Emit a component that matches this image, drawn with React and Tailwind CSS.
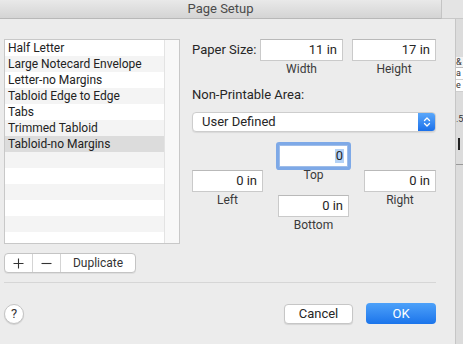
import React from "react";

const rows = [
  "Half Letter",
  "Large Notecard Envelope",
  "Letter-no Margins",
  "Tabloid Edge to Edge",
  "Tabs",
  "Trimmed Tabloid",
  "Tabloid-no Margins",
  "",
  "",
  "",
  "",
  "",
  "",
];

function Field({ children, w }) {
  return (
    <div
      className={`h-[22px] bg-white border border-[#cacaca] border-t-[#b9b9b9] flex items-center justify-end pr-[5px] text-[13px] text-[#262626] ${w}`}
    >
      {children}
    </div>
  );
}

function Label({ children }) {
  return <div className="h-[14px] leading-[14px] text-[12px] text-[#3a3a3a] text-center whitespace-nowrap">{children}</div>;
}

export default function App() {
  return (
    <div className="w-[463px] h-[344px] overflow-hidden flex flex-col bg-[#ececec] font-['Roboto',sans-serif] text-[#262626]">
      {/* title bar row */}
      <div className="h-[19px] flex shrink-0">
        <div className="w-[442px] h-full bg-gradient-to-b from-[#e9e9e9] to-[#d4d4d4] border-b border-[#b8b8b8] border-r border-r-[#c4c4c4] flex items-center justify-center text-[13px] text-[#4b4b4b]">
          Page Setup
        </div>
        <div className="flex-1 bg-[#e4e4e4] border-b border-[#c8c8c8]" />
      </div>

      <div className="flex-1 flex min-h-0">
        {/* sheet */}
        <div className="w-[456px] h-full bg-[#ececec] border-r border-[#c6c6c6] pl-[4px] pr-[19px] pt-[20px] flex flex-col">
          <div className="flex">
            {/* left column */}
            <div className="w-[176px] flex flex-col">
              <div className="h-[205px] border border-[#c8c8c8] flex overflow-hidden bg-white">
                <div className="w-[159px] flex flex-col">
                  {rows.map((r, i) => (
                    <div
                      key={i}
                      className={`h-[16px] shrink-0 leading-[16px] pl-[3px] text-[12px] text-[#222] whitespace-nowrap ${
                        i === 6 ? "bg-[#dcdcdc]" : i % 2 === 0 ? "bg-white" : "bg-[#f4f4f4]"
                      }`}
                    >
                      {r}
                    </div>
                  ))}
                </div>
                <div className="flex-1 bg-[#f8f8f8] border-l border-[#e3e3e3]" />
              </div>
              <div className="mt-[9px] h-[20px] w-[132px] flex bg-white border border-[#c4c4c4] rounded-[4px] shadow-[0_1px_0_rgba(0,0,0,0.06)] text-[#333]">
                <div className="w-[28px] flex items-center justify-center border-r border-[#d4d4d4]">
                  <svg width="11" height="11" viewBox="0 0 11 11">
                    <path d="M5.5 0.5v10M0.5 5.5h10" stroke="#333" strokeWidth="1.1" />
                  </svg>
                </div>
                <div className="w-[28px] flex items-center justify-center border-r border-[#d4d4d4]">
                  <svg width="11" height="11" viewBox="0 0 11 11">
                    <path d="M0.5 5.5h10" stroke="#333" strokeWidth="1.1" />
                  </svg>
                </div>
                <div className="flex-1 flex items-center justify-center text-[12px]">Duplicate</div>
              </div>
            </div>

            {/* right panel */}
            <div className="ml-[12px] w-[244px] flex flex-col">
              <div className="flex items-center">
                <div className="w-[68px] text-[13px] whitespace-nowrap">Paper Size:</div>
                <Field w="w-[83px]">11 in</Field>
                <div className="w-[9px]" />
                <Field w="w-[84px]">17 in</Field>
              </div>
              <div className="flex mt-[1px]">
                <div className="w-[68px]" />
                <div className="w-[83px]"><Label>Width</Label></div>
                <div className="w-[9px]" />
                <div className="w-[84px]"><Label>Height</Label></div>
              </div>
              <div className="mt-[11px] h-[16px] leading-[16px] text-[13px] whitespace-nowrap">Non-Printable Area:</div>
              <div className="mt-[9px] h-[20px] flex bg-white rounded-[4px] border border-[#cdcdcd] shadow-[0_1px_1px_rgba(0,0,0,0.08)] overflow-hidden">
                <div className="flex-1 flex items-center pl-[9px] text-[13px]">User Defined</div>
                <div className="w-[17px] bg-gradient-to-b from-[#5aa7fa] to-[#1a70ea] flex items-center justify-center">
                  <svg width="8" height="12" viewBox="0 0 8 12">
                    <path d="M1.5 4.5L4 2L6.5 4.5M1.5 7.5L4 10L6.5 7.5" stroke="white" strokeWidth="1.3" fill="none" strokeLinecap="round" strokeLinejoin="round" />
                  </svg>
                </div>
              </div>

              <div className="mt-[13px] flex">
                <div className="w-[71px] flex flex-col">
                  <div className="mt-[25px]"><Field w="w-full">0 in</Field></div>
                  <div className="mt-[1px]"><Label>Left</Label></div>
                </div>
                <div className="ml-[15px] w-[71px] flex flex-col">
                  <div className="px-[1px]">
                    <div className="h-[22px] bg-white border border-[#9fbde9] rounded-[1px] ring-[3px] ring-[#7ea9e7] flex items-center justify-end pr-[3px] text-[13px]">
                      <span className="bg-[#b4d2f6] px-[1px] leading-[14px]">0</span>
                    </div>
                  </div>
                  <div className="mt-[1px]"><Label>Top</Label></div>
                  <div className="mt-[13px]"><Field w="w-full">0 in</Field></div>
                  <div className="mt-[1px]"><Label>Bottom</Label></div>
                </div>
                <div className="ml-[15px] w-[72px] flex flex-col">
                  <div className="mt-[25px]"><Field w="w-full">0 in</Field></div>
                  <div className="mt-[1px]"><Label>Right</Label></div>
                </div>
              </div>
            </div>
          </div>

          <div className="mt-[9px] h-px bg-[#d6d6d6]" />

          <div className="mt-[20px] flex items-center">
            <div className="w-[20px] h-[20px] rounded-full bg-white border border-[#c4c4c4] shadow-[0_1px_1px_rgba(0,0,0,0.12)] flex items-center justify-center text-[13px] text-[#333]">
              ?
            </div>
            <div className="flex-1" />
            <div className="w-[69px] h-[20px] bg-white border border-[#c6c6c6] rounded-[4px] shadow-[0_1px_1px_rgba(0,0,0,0.1)] flex items-center justify-center text-[13px]">
              Cancel
            </div>
            <div className="ml-[13px] w-[70px] h-[21px] rounded-[4px] bg-gradient-to-b from-[#4da1f9] to-[#1a74eb] flex items-center justify-center text-[13px] text-white">
              OK
            </div>
          </div>
        </div>

        {/* background window strip */}
        <div className="flex-1 bg-[#dcdcdc] flex flex-col overflow-hidden text-[9px] leading-[10px] text-[#333]">
          <div className="h-[38px]" />
          <div className="h-[11px] bg-[#f2f2f2] border-b border-[#bdbdbd] whitespace-nowrap overflow-hidden">&amp;</div>
          <div className="h-[12px] bg-white border-b border-[#cfcfcf] whitespace-nowrap overflow-hidden">a</div>
          <div className="h-[12px] bg-white border-b border-[#cfcfcf] whitespace-nowrap overflow-hidden">e</div>
          <div className="h-[22px]" />
          <div className="h-[11px] whitespace-nowrap overflow-hidden">.5</div>
          <div className="h-[13px]" />
          <div className="h-[12px] w-[2px] ml-[2px] bg-[#222]" />
          <div className="h-[14px]" />
          <div className="h-px bg-[#999]" />
        </div>
      </div>
    </div>
  );
}
